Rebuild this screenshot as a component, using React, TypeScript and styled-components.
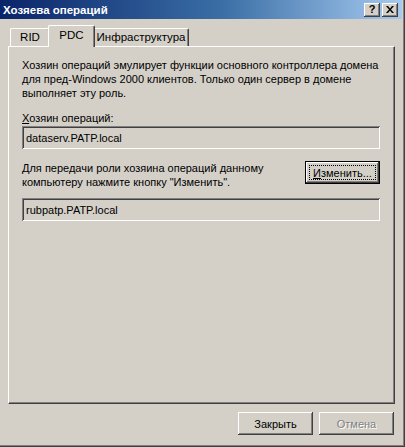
import React from "react";
import styled, { createGlobalStyle } from "styled-components";

const Global = createGlobalStyle`
  html, body { margin: 0; padding: 0; background: #d4d0c8; }
  body { font-family: "Liberation Sans", Arial, sans-serif; font-size: 11px; color: #000; }
`;

const Window = styled.div`
  width: 405px;
  height: 447px;
  box-sizing: border-box;
  background: #d4d0c8;
  display: flex;
  flex-direction: column;
  border-right: 1px solid #404040;
  border-bottom: 1px solid #404040;
  box-shadow: inset -1px -1px #808080;
  overflow: hidden;
`;

const TitleBar = styled.div`
  height: 19px;
  margin-right: 2px;
  padding: 0 4px 0 3px;
  display: flex;
  align-items: center;
  justify-content: space-between;
  background: linear-gradient(to right, #0a246a 0%, #3a6ea5 55%, #a6caf0 100%);
`;

const Title = styled.span`
  color: #fff;
  font-weight: bold;
  font-size: 11.5px;
`;

const CaptionButtons = styled.div`
  display: flex;
  gap: 2px;
`;

const CaptionButton = styled.div`
  width: 16px;
  height: 14px;
  background: #d4d0c8;
  box-shadow: inset -1px -1px #404040, inset 1px 1px #fff, inset -2px -2px #808080;
  display: flex;
  align-items: center;
  justify-content: center;
  font-weight: bold;
  font-size: 11px;
  line-height: 1;
  color: #000;
`;

const Body = styled.div`
  flex: 1;
  display: flex;
  flex-direction: column;
  padding: 6px 9px 0 8px;
`;

const TabRow = styled.div`
  display: flex;
  align-items: flex-end;
  height: 21px;
  padding-left: 2px;
  position: relative;
  z-index: 1;
`;

const Tab = styled.div<{ $active?: boolean; $width: number }>`
  box-sizing: border-box;
  width: ${(p) => p.$width}px;
  height: ${(p) => (p.$active ? 22 : 18)}px;
  margin: ${(p) => (p.$active ? "0 -2px -1px -2px" : "0")};
  padding-bottom: ${(p) => (p.$active ? 4 : 1)}px;
  background: #d4d0c8;
  border-top: 1px solid #fff;
  border-left: 1px solid #fff;
  border-right: 1px solid #404040;
  border-radius: 2px 2px 0 0;
  box-shadow: inset -1px 0 #808080;
  display: flex;
  align-items: center;
  justify-content: center;
  font-size: 11.5px;
  position: relative;
  z-index: ${(p) => (p.$active ? 2 : 1)};
`;

const Panel = styled.div`
  height: 358px;
  box-sizing: border-box;
  border-top: 1px solid #fff;
  border-left: 1px solid #fff;
  border-right: 1px solid #404040;
  border-bottom: 1px solid #404040;
  box-shadow: inset -1px -1px #808080;
  padding: 11px 13px 0 13px;
  display: flex;
  flex-direction: column;
`;

const Para = styled.p`
  margin: 0;
  line-height: 14px;
  font-size: 11px;
  white-space: nowrap;
`;

const Label = styled.div`
  margin-top: 11px;
  line-height: 14px;
  font-size: 11px;
`;

const U = styled.span`
  text-decoration: underline;
`;

const Field = styled.div<{ $top: number }>`
  margin-top: ${(p) => p.$top}px;
  height: 23px;
  width: 358px;
  box-sizing: border-box;
  padding: 0 4px;
  display: flex;
  align-items: center;
  background: #d4d0c8;
  box-shadow: inset 1px 1px #808080, inset -1px -1px #fff, inset 2px 2px #404040,
    inset -2px -2px #d4d0c8;
  font-size: 11px;
`;

const ChangeRow = styled.div`
  margin-top: 12px;
  width: 358px;
  display: flex;
  justify-content: space-between;
  align-items: flex-start;
`;

const Button = styled.button<{ $default?: boolean; $disabled?: boolean }>`
  width: 75px;
  height: 23px;
  padding: 0;
  border: none;
  background: #d4d0c8;
  font-family: "Liberation Sans", Arial, sans-serif;
  font-size: 11px;
  color: ${(p) => (p.$disabled ? "#808080" : "#000")};
  text-shadow: ${(p) => (p.$disabled ? "1px 1px #fff" : "none")};
  box-shadow: ${(p) =>
    p.$default
      ? "inset 0 0 0 1px #000, inset -2px -2px #404040, inset 2px 2px #fff, inset -3px -3px #808080"
      : "inset -1px -1px #404040, inset 1px 1px #fff, inset -2px -2px #808080"};
  display: flex;
  align-items: center;
  justify-content: center;
  cursor: default;
`;

const FocusText = styled.span`
  box-sizing: border-box;
  width: 67px;
  height: 15px;
  border: 1px dotted #000;
  display: flex;
  align-items: center;
  justify-content: center;
`;

const Footer = styled.div`
  display: flex;
  justify-content: flex-end;
  gap: 6px;
  padding: 8px 1px 0 0;
`;

export default function App() {
  return (
    <>
      <Global />
      <Window>
        <TitleBar>
          <Title>Хозяева операций</Title>
          <CaptionButtons>
            <CaptionButton>?</CaptionButton>
            <CaptionButton>
              <svg width="8" height="7" viewBox="0 0 8 7">
                <path d="M0 0h2l2 2.5L6 0h2L5 3.5 8 7H6L4 4.5 2 7H0l3-3.5z" fill="#000" />
              </svg>
            </CaptionButton>
          </CaptionButtons>
        </TitleBar>
        <Body>
          <TabRow>
            <Tab $width={40}>RID</Tab>
            <Tab $active $width={47}>PDC</Tab>
            <Tab $width={96}>Инфраструктура</Tab>
          </TabRow>
          <Panel>
            <Para>
              Хозяин операций эмулирует функции основного контроллера домена
              <br />
              для пред-Windows 2000 клиентов. Только один сервер в домене
              <br />
              выполняет эту роль.
            </Para>
            <Label>
              <U>Х</U>озяин операций:
            </Label>
            <Field $top={1}>dataserv.PATP.local</Field>
            <ChangeRow>
              <Para>
                <U>Д</U>ля передачи роли хозяина операций данному
                <br />
                компьютеру нажмите кнопку "Изменить".
              </Para>
              <Button $default>
                <FocusText>
                  <span>
                    <U>И</U>зменить...
                  </span>
                </FocusText>
              </Button>
            </ChangeRow>
            <Field $top={9}>rubpatp.PATP.local</Field>
          </Panel>
          <Footer>
            <Button>Закрыть</Button>
            <Button $disabled>Отмена</Button>
          </Footer>
        </Body>
      </Window>
    </>
  );
}
